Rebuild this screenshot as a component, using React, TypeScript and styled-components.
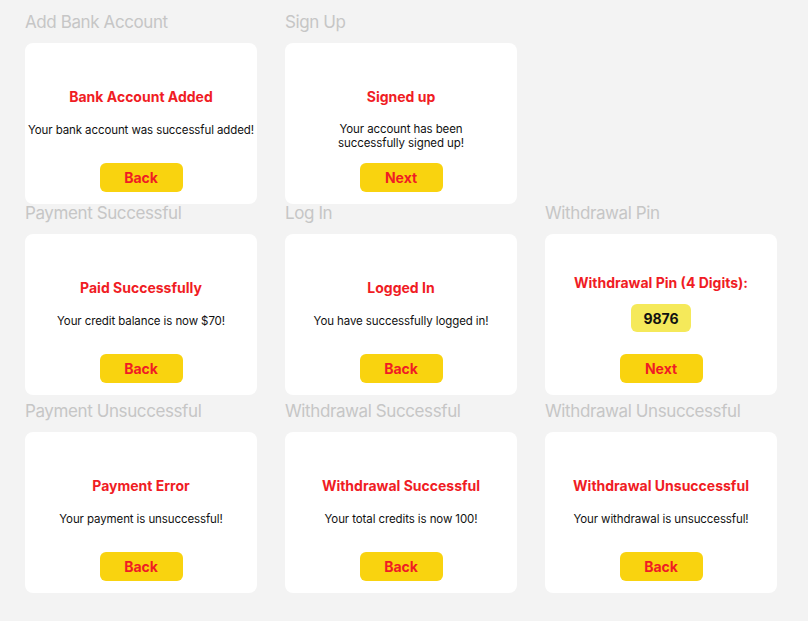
import React from "react";
import styled, { createGlobalStyle } from "styled-components";

const GlobalStyle = createGlobalStyle`
  html, body {
    margin: 0;
    padding: 0;
    background: #f3f3f3;
    font-family: Inter, "Noto Sans", Arial, sans-serif;
  }
  * { box-sizing: border-box; }
`;

const Page = styled.div`
  width: 808px;
  height: 621px;
  padding-left: 25px;
  display: flex;
  flex-direction: column;
  background: #f3f3f3;
  overflow: hidden;
`;

const Row = styled.div<{ $top: number }>`
  display: grid;
  grid-template-columns: repeat(3, 232px);
  column-gap: 28px;
  margin-top: ${(p) => p.$top}px;
`;

const Section = styled.section`
  display: flex;
  flex-direction: column;
  gap: 10px;
`;

const Label = styled.div`
  font-size: 17px;
  line-height: 22px;
  letter-spacing: -0.4px;
  color: #c6c6c6;
  white-space: nowrap;
`;

const Card = styled.div<{ $top: number }>`
  height: 161px;
  background: #ffffff;
  border-radius: 8px;
  display: flex;
  flex-direction: column;
  align-items: center;
  padding: ${(p) => p.$top}px 0 12px;
`;

const Title = styled.h2`
  margin: 0;
  font-size: 14px;
  line-height: 18px;
  font-weight: 700;
  color: #f01c24;
  text-align: center;
  white-space: nowrap;
`;

const Body = styled.p<{ $gap: number }>`
  margin: ${(p) => p.$gap}px 0 0;
  font-size: 11.5px;
  line-height: 13.5px;
  letter-spacing: -0.1px;
  color: #111111;
  text-align: center;
  white-space: pre-line;
`;

const Pin = styled.div`
  margin-top: 12px;
  width: 60px;
  height: 28px;
  border-radius: 6px;
  background: #f5e95a;
  display: flex;
  align-items: center;
  justify-content: center;
  font-size: 14px;
  font-weight: 700;
  color: #111111;
`;

const Button = styled.button`
  margin-top: auto;
  width: 83px;
  height: 29px;
  border: none;
  border-radius: 6px;
  background: #f9d30f;
  color: #f01c24;
  font-family: inherit;
  font-size: 14px;
  font-weight: 700;
  display: flex;
  align-items: center;
  justify-content: center;
  padding: 0;
`;

type Item = {
  label: string;
  title: string;
  body?: string;
  pin?: string;
  action: string;
};

const rows: { top: number; items: (Item | null)[] }[] = [
  {
    top: 11,
    items: [
      {
        label: "Add Bank Account",
        title: "Bank Account Added",
        body: "Your bank account was successful added!",
        action: "Back",
      },
      {
        label: "Sign Up",
        title: "Signed up",
        body: "Your account has been\nsuccessfully signed up!",
        action: "Next",
      },
      null,
    ],
  },
  {
    top: -2,
    items: [
      {
        label: "Payment Successful",
        title: "Paid Successfully",
        body: "Your credit balance is now $70!",
        action: "Back",
      },
      {
        label: "Log In",
        title: "Logged In",
        body: "You have successfully logged in!",
        action: "Back",
      },
      {
        label: "Withdrawal Pin",
        title: "Withdrawal Pin (4 Digits):",
        pin: "9876",
        action: "Next",
      },
    ],
  },
  {
    top: 5,
    items: [
      {
        label: "Payment Unsuccessful",
        title: "Payment Error",
        body: "Your payment is unsuccessful!",
        action: "Back",
      },
      {
        label: "Withdrawal Successful",
        title: "Withdrawal Successful",
        body: "Your total credits is now 100!",
        action: "Back",
      },
      {
        label: "Withdrawal Unsuccessful",
        title: "Withdrawal Unsuccessful",
        body: "Your withdrawal is unsuccessful!",
        action: "Back",
      },
    ],
  },
];

export default function App() {
  return (
    <>
      <GlobalStyle />
      <Page>
        {rows.map((row, ri) => (
          <Row key={ri} $top={row.top}>
            {row.items.map((item, ci) =>
              item ? (
                <Section key={ci}>
                  <Label>{item.label}</Label>
                  <Card $top={item.pin ? 40 : 45}>
                    <Title>{item.title}</Title>
                    {item.body && (
                      <Body $gap={item.body.includes("\n") ? 17 : 18}>
                        {item.body}
                      </Body>
                    )}
                    {item.pin && <Pin>{item.pin}</Pin>}
                    <Button>{item.action}</Button>
                  </Card>
                </Section>
              ) : (
                <div key={ci} />
              )
            )}
          </Row>
        ))}
      </Page>
    </>
  );
}
